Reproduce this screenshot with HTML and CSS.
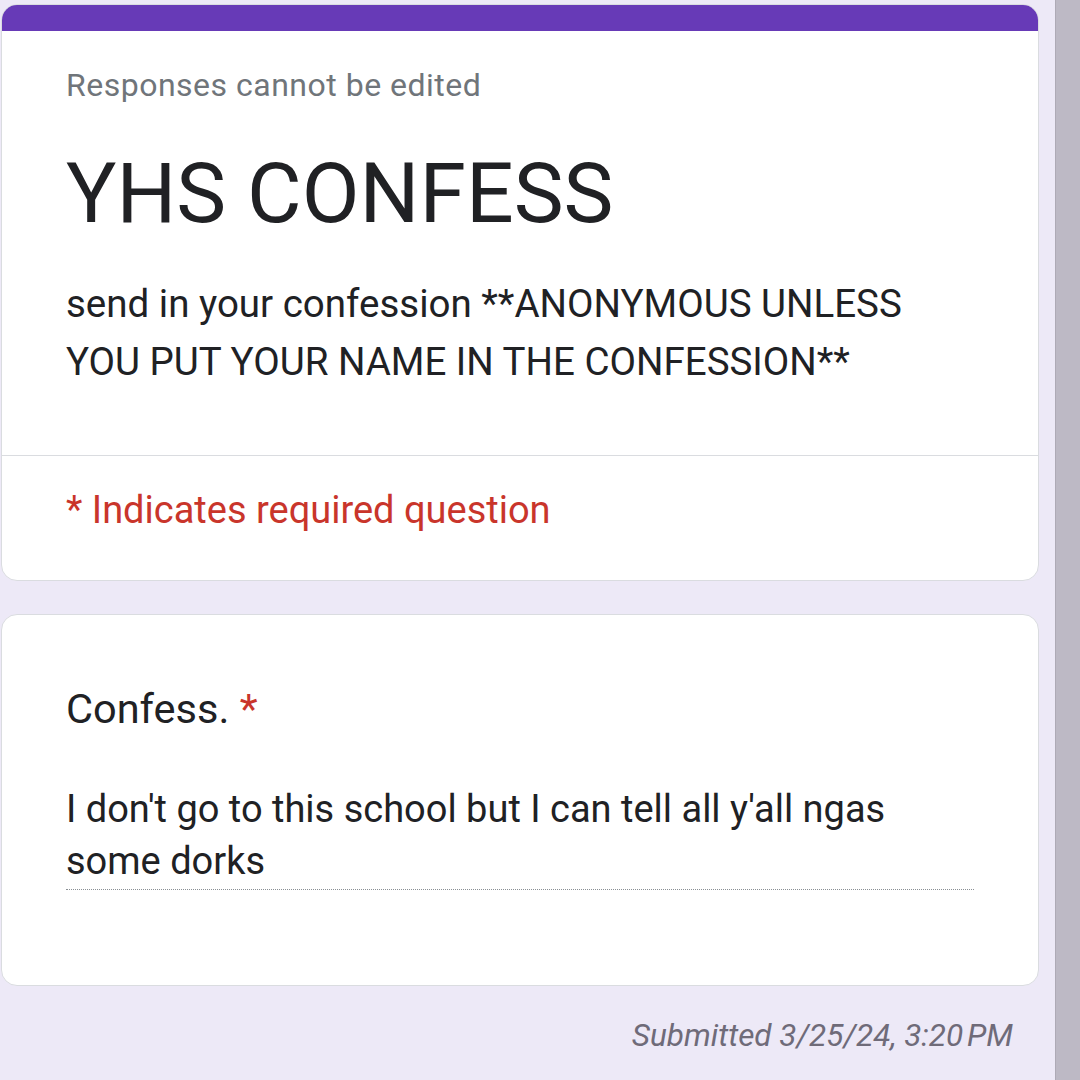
FILE: index.html
```html
<!DOCTYPE html>
<html lang="en">

<head>
	<meta charset="UTF-8">
	<meta name="viewport" content="width=device-width, initial-scale=1.0">
	<title>YHS CONFESS</title>
	<link rel="stylesheet" href="styles.css">
</head>

<body>
	<div id="page">
		<main id="form">
			<section class="card header-card">
				<div class="top-bar"></div>
				<div class="header-body">
					<p class="notice">Responses cannot be edited</p>
					<h1 class="title">YHS CONFESS</h1>
					<p class="description">send in your confession **ANONYMOUS UNLESS YOU PUT YOUR NAME IN THE CONFESSION**</p>
				</div>
				<div class="required-note">* Indicates required question</div>
			</section>

			<section class="card question-card">
				<div class="question-title">Confess. <span class="asterisk">*</span></div>
				<div class="answer">I don't go to this school but I can tell all y'all ngas some dorks</div>
			</section>

			<div class="submitted">Submitted 3/25/24, 3:20&#8239;PM</div>
		</main>
		<div id="scrollbar"></div>
	</div>
</body>

</html>
```

FILE: styles.css
```css
body {
	margin: 0;
	background-color: #ede9f7;
	font-family: Roboto, 'Noto Sans', sans-serif;
	color: #202124;
}

#page {
	display: flex;
	height: 1080px;
	overflow: hidden;
}

#form {
	flex-shrink: 0;
	width: 1038px;
	padding: 4px 0 0 1px;
	margin-right: 16px;
}

#scrollbar {
	flex-shrink: 0;
	width: 24px;
	background-color: #bdb9c5;
	border-left: 1px solid #aeaab6;
}

.card {
	background-color: #fff;
	border: 1px solid #dadce0;
	border-radius: 16px;
	overflow: hidden;
}

.top-bar {
	height: 26px;
	background-color: #673ab7;
}

.header-body {
	padding: 36px 64px 64px 64px;
	border-bottom: 1px solid #dadce0;
}

.notice {
	margin: 0;
	font-size: 32px;
	line-height: 36px;
	color: #70757a;
	letter-spacing: 0.5px;
}

.title {
	margin: 41px 0 0 0;
	font-size: 84px;
	line-height: 100px;
	font-weight: 400;
}

.description {
	margin: 31px 0 0 0;
	font-size: 38.5px;
	line-height: 58px;
}

.required-note {
	padding: 34px 64px 50px 64px;
	font-size: 38px;
	line-height: 40px;
	color: #c9352b;
}

.question-card {
	margin-top: 33px;
	padding: 70px 64px 95px 64px;
}

.question-title {
	font-size: 41.5px;
	line-height: 48px;
}

.asterisk {
	color: #c9352b;
}

.answer {
	margin-top: 50px;
	padding-bottom: 2px;
	font-size: 38px;
	line-height: 52px;
	border-bottom: 1px dotted #8a8f94;
}

.submitted {
	margin: 30px 26px 0 0;
	text-align: right;
	font-size: 31.5px;
	line-height: 40px;
	font-style: italic;
	color: #6f6b79;
}
```
